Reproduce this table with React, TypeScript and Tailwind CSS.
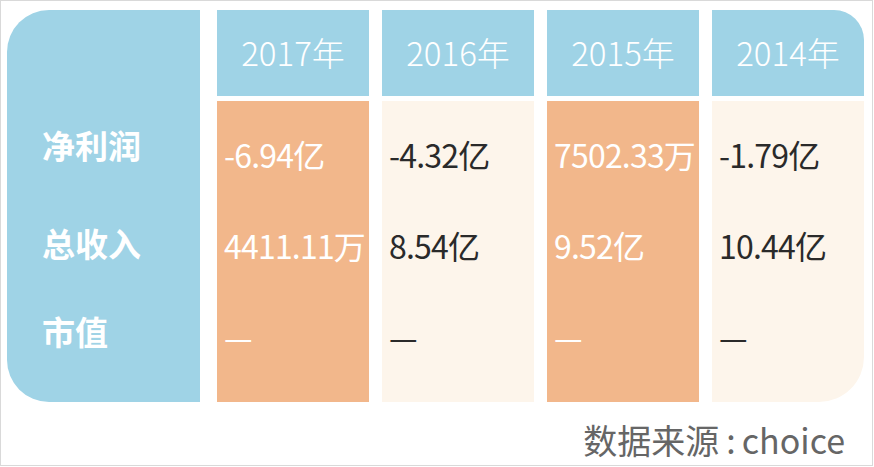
const font = { fontFamily: '"Noto Sans CJK SC", "Noto Sans", sans-serif' }

const columns = [
  { year: '2017年', hot: true, values: ['-6.94亿', '4411.11万', '—'] },
  { year: '2016年', hot: false, values: ['-4.32亿', '8.54亿', '—'] },
  { year: '2015年', hot: true, values: ['7502.33万', '9.52亿', '—'] },
  { year: '2014年', hot: false, values: ['-1.79亿', '10.44亿', '—'] },
]

export default function App() {
  return (
    <div className="w-[873px] h-[466px] bg-white border border-[#d9d9d9] pl-[6px] pt-[9px]" style={font}>
      <div className="flex">
        <div className="w-[193px] h-[392px] bg-[#9fd3e6] rounded-l-[42px] text-white font-bold text-[33px] pl-[35px] pt-[115px] leading-[40px]">
          <p>净利润</p>
          <p className="mt-[58px]">总收入</p>
          <p className="mt-[48px]">市值</p>
        </div>
        <div className="flex gap-[13px] ml-[17px]">
          {columns.map((c, i) => (
            <div key={c.year} className="w-[152px] flex flex-col gap-[5px]">
              <div
                className={`h-[86px] bg-[#9fd3e6] text-white text-[33px] font-light flex items-center justify-center ${
                  i === 3 ? 'rounded-tr-[30px]' : ''
                }`}
              >
                {c.year}
              </div>
              <div
                className={`h-[301px] pl-[7px] pt-[8px] text-[32px] leading-[91px] whitespace-nowrap ${
                  c.hot ? 'bg-[#f2b78b] text-white' : 'bg-[#fdf5eb] text-[#2a2a2a]'
                } ${i === 3 ? 'rounded-br-[45px]' : ''}`}
              >
                {c.values.map((v, j) => (
                  <p key={j} className="tracking-[-0.8px]">{v}</p>
                ))}
              </div>
            </div>
          ))}
        </div>
      </div>
      <p className="text-right pr-[27px] mt-[18px] text-[34px] leading-[40px] text-[#666]">
        数据来源<span className="pl-[7px] pr-[6px]">:</span>choice
      </p>
    </div>
  )
}
